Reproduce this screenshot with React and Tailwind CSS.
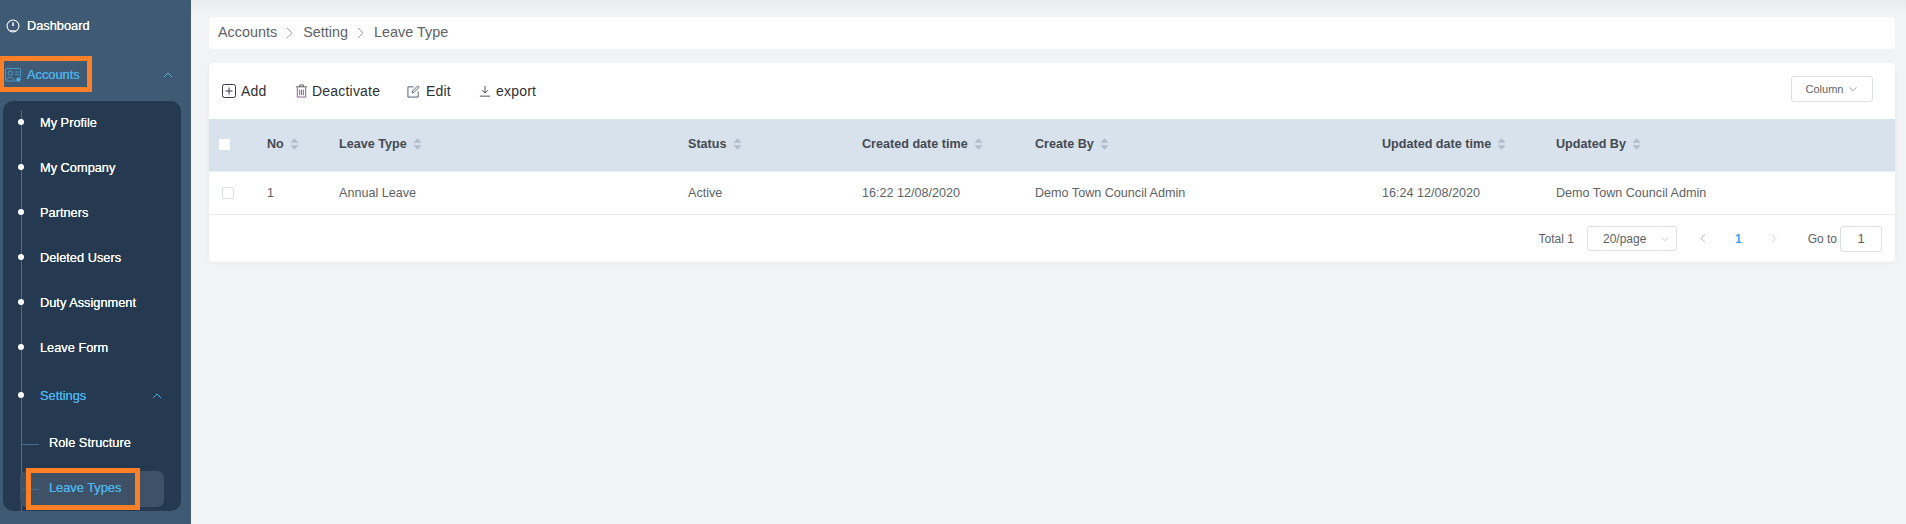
import React from "react";

const Chevron = ({ up, className }) => (
  <svg viewBox="0 0 12 12" className={className} fill="none" stroke="currentColor" strokeWidth="1">
    <path d={up ? "M2 8l4-4 4 4" : "M2 4l4 4 4-4"} />
  </svg>
);
const Right = ({ className }) => (
  <svg viewBox="0 0 12 12" className={className} fill="none" stroke="currentColor" strokeWidth="1">
    <path d="M4 1l5 5-5 5" />
  </svg>
);
const Sort = () => (
  <svg viewBox="0 0 10 13" className="w-[9px] h-[12px] ml-[6px] shrink-0" fill="#b4bccc">
    <path d="M5 0l4.5 5h-9z" />
    <path d="M5 13l4.5-5h-9z" />
  </svg>
);

const subItems = ["My Profile", "My Company", "Partners", "Deleted Users", "Duty Assignment", "Leave Form"];
const sideText = "text-[12.8px] [text-shadow:0_0_0.6px_currentColor]";

function SubRow({ label, active, chevron }) {
  return (
    <div className={`relative h-[45px] flex items-center pl-[37px] pr-[18px] justify-between ${sideText} ${active ? "text-[#4db3ec]" : "text-white"}`}>
      <span className="absolute left-[15px] top-[19px] w-[6px] h-[6px] rounded-full bg-white" />
      <span>{label}</span>
      {chevron && <Chevron up className="w-[12px] h-[12px] text-[#4db3ec]" />}
    </div>
  );
}

function Sidebar() {
  return (
    <aside className="w-[191px] shrink-0 h-[524px] bg-[#3f5a75] relative overflow-hidden" style={{ fontFamily: '"Liberation Sans", Arial, sans-serif' }}>
      <div className={`h-[50px] pt-[1px] flex items-center pl-[6px] text-white ${sideText}`}>
        <svg viewBox="0 0 16 16" className="w-[14px] h-[14px] mr-[7px]" fill="none" stroke="currentColor" strokeWidth="1.2">
          <circle cx="8" cy="8" r="6.8" />
          <path d="M8 4v4" strokeWidth="1.8" />
          <path d="M5 13.5h6" />
        </svg>
        Dashboard
      </div>
      <div className={`h-[50px] pb-[1px] flex items-center justify-between pl-[5px] pr-[17px] text-[#4db3ec] ${sideText}`}>
        <span className="flex items-center">
          <svg viewBox="0 0 32 28" className="w-[16px] h-[14px] mr-[6px]" fill="none" stroke="currentColor" strokeWidth="1.4">
            <path d="M24 26H3a2 2 0 0 1-2-2V3a2 2 0 0 1 2-2h26a2 2 0 0 1 2 2v16" />
            <circle cx="10.5" cy="10" r="4.5" />
            <path d="M3 24c1-7 14-7 15 0" />
            <path d="M20 8h8M20 13h8" />
            <circle cx="27" cy="23" r="3.5" fill="currentColor" />
          </svg>
          Accounts
        </span>
        <Chevron up className="w-[12px] h-[12px]" />
      </div>
      <div className="relative ml-[3px] mt-[1px] w-[178px] h-[410px] bg-[#253a50] rounded-[10px] overflow-hidden">
        <div className="absolute left-[18px] top-[9px] bottom-0 w-px bg-[#47708f]" />
        <div className="-mt-[1px]">
          {subItems.map((s) => <SubRow key={s} label={s} />)}
        </div>
        <div className="h-[3px]" />
        <SubRow label="Settings" active chevron />
        <div className={`relative h-[45px] mt-[2px] flex items-center pl-[46px] text-white ${sideText}`}>
          <span className="absolute left-[19px] top-[24px] w-[17px] h-px bg-[#47708f]" />
          Role Structure
        </div>
        <div className={`relative h-[36px] mt-[6px] ml-[17px] w-[144px] pb-[2px] rounded-[7px] bg-[#3f5166] flex items-center pl-[29px] text-[#4db3ec] ${sideText}`}>
          <span className="absolute left-[2px] top-[18px] w-[17px] h-px bg-[#47708f]" />
          Leave Types
        </div>
      </div>
      <div className="absolute left-0 top-[56px] w-[92px] h-[36px] border-[5px] border-l-[4px] border-[#ff7f27]" />
      <div className="absolute left-[26px] top-[468px] w-[114px] h-[42px] border-[5px] border-[#ff7f27]" />
    </aside>
  );
}

const cols = [
  { label: "No", w: "w-[72px]", v: "1" },
  { label: "Leave Type", w: "w-[349px]", v: "Annual Leave" },
  { label: "Status", w: "w-[174px]", v: "Active" },
  { label: "Created date time", w: "w-[173px]", v: "16:22 12/08/2020" },
  { label: "Create By", w: "w-[347px]", v: "Demo Town Council Admin" },
  { label: "Updated date time", w: "w-[174px]", v: "16:24 12/08/2020" },
  { label: "Updated By", w: "w-[300px]", v: "Demo Town Council Admin" },
];

const Tool = ({ icon, label, className }) => (
  <span className={`flex items-center text-[14px] tracking-[0.2px] text-[#303133] ${className}`}>
    {icon}
    {label}
  </span>
);

export default function App() {
  return (
    <div className="flex w-[1906px] h-[524px] overflow-hidden bg-[#f2f3f5]" style={{ fontFamily: '"Liberation Sans", Arial, sans-serif' }}>
      <Sidebar />
      <main className="flex-1 relative pt-[17px] pl-[18px] pr-[11px] bg-gradient-to-b from-[#e9eaec] to-[#f2f3f5] to-[14px]">
        <nav className="h-[32px] bg-white rounded-[4px] flex items-center pl-[9px] text-[14.4px] text-[#606266]">
          Accounts
          <Right className="w-[12px] h-[12px] ml-[6px] mr-[8px] text-[#a8abb2]" />
          Setting
          <Right className="w-[12px] h-[12px] ml-[6px] mr-[8px] text-[#a8abb2]" />
          Leave Type
        </nav>
        <section className="mt-[14px] h-[199px] bg-white rounded-[4px] overflow-hidden shadow-[0_1px_4px_rgba(0,0,0,0.04)]">
          <div className="h-[56px] flex items-center justify-between pl-[13px] pr-[22px]">
            <div className="flex items-center">
              <Tool
                className="w-[73px]"
                label="Add"
                icon={
                  <svg viewBox="0 0 14 14" className="w-[14px] h-[14px] mr-[5px]" fill="none" stroke="#3a3a4a" strokeWidth="1">
                    <rect x="0.5" y="0.5" width="13" height="13" rx="2" />
                    <path d="M7 3.5v7M3.5 7h7" />
                  </svg>
                }
              />
              <Tool
                className="w-[112px]"
                label="Deactivate"
                icon={
                  <svg viewBox="0 0 14 15" className="w-[13px] h-[14px] mr-[4px]" fill="none" stroke="#7a5a86" strokeWidth="1">
                    <path d="M1 3h12M5 3V1h4v2" stroke="#555" />
                    <path d="M2.5 3.5v10.5h9V3.5" />
                    <path d="M5 6v6M7 6v6M9 6v6" />
                  </svg>
                }
              />
              <Tool
                className="w-[72px]"
                label="Edit"
                icon={
                  <svg viewBox="0 0 14 14" className="w-[13px] h-[13px] mr-[6px]" fill="none" stroke="#4b5563" strokeWidth="1">
                    <path d="M7 2H1v11h11V7" />
                    <path d="M5.5 8.5L6 6.5 11.5 1l1.5 1.5L7.5 8z" />
                  </svg>
                }
              />
              <Tool
                label="export"
                icon={
                  <svg viewBox="0 0 14 14" className="w-[12px] h-[12px] mr-[5px]" fill="none" stroke="#3a3a4a" strokeWidth="1">
                    <path d="M7 1v8M3.5 6L7 9.5 10.5 6M1 13h12" />
                  </svg>
                }
              />
            </div>
            <button className="w-[82px] h-[26px] mt-[-4px] rounded-[3px] border border-[#dcdfe6] text-[11px] text-[#606266] flex items-center justify-center gap-[5px]">
              Column
              <Chevron className="w-[10px] h-[10px] text-[#8d9095]" />
            </button>
          </div>

          <div className="h-[52px] pb-[2px] bg-[#d7e2ec] flex items-center text-[12.6px] font-bold text-[#454a52]">
            <div className="w-[58px] pl-[10px]">
              <span className="block w-[11px] h-[11px] bg-white rounded-[1px]" />
            </div>
            {cols.map((c) => (
              <div key={c.label} className={`${c.w} flex items-center`}>
                {c.label}
                <Sort />
              </div>
            ))}
          </div>

          <div className="h-[44px] border-b border-[#e8ebf3] border-t border-t-[#eef1f5] flex items-center text-[12.6px] text-[#606266]">
            <div className="w-[58px] pl-[13px]">
              <span className="block w-[12px] h-[12px] bg-white border border-[#dcdfe6] rounded-[2px]" />
            </div>
            {cols.map((c) => (
              <div key={c.label} className={c.w}>{c.v}</div>
            ))}
          </div>

          <div className="h-[47px] flex items-center justify-end pr-[13px] text-[12px] text-[#606266]">
            <span>Total 1</span>
            <div className="ml-[13px] w-[90px] h-[25px] border border-[#dcdfe6] rounded-[3px] flex items-center justify-between pl-[15px] pr-[6px]">
              20/page
              <Chevron className="w-[10px] h-[10px] text-[#c0c4cc]" />
            </div>
            <svg viewBox="0 0 12 12" className="w-[9px] h-[11px] ml-[22px] text-[#c0c4cc]" fill="none" stroke="currentColor" strokeWidth="1.4"><path d="M8 1L3 6l5 5" /></svg>
            <span className="ml-[27px] font-bold text-[#409eff]">1</span>
            <Right className="w-[9px] h-[11px] ml-[27px] text-[#c0c4cc]" />
            <span className="ml-[30px]">Go to</span>
            <div className="ml-[3px] w-[42px] h-[26px] border border-[#dcdfe6] rounded-[3px] flex items-center justify-center text-[13px]">1</div>
          </div>
        </section>
      </main>
    </div>
  );
}
